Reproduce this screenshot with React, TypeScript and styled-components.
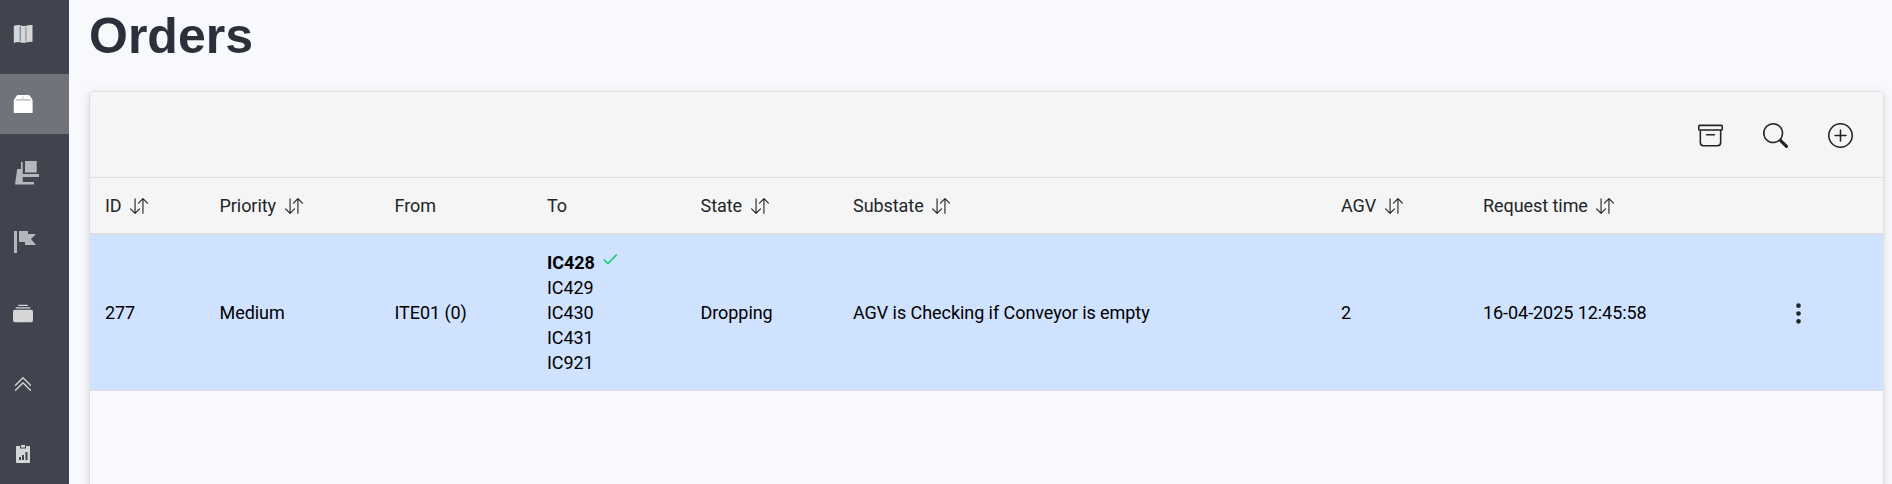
import React from "react";
import styled, { createGlobalStyle } from "styled-components";
import {
  BsArchive,
  BsArrowDownUp,
  BsChevronDoubleUp,
  BsCollectionFill,
  BsPlusCircle,
  BsSearch,
  BsThreeDotsVertical,
} from "react-icons/bs";

const GlobalStyle = createGlobalStyle`
  * { box-sizing: border-box; }
  body {
    margin: 0;
    background: #f8f9fd;
    color: #212529;
    font-family: Roboto, "Liberation Sans", sans-serif;
    font-size: 18px;
    line-height: 25px;
    letter-spacing: -0.06px;
    overflow: hidden;
  }
`;

const Page = styled.div`
  display: flex;
  height: 484px;
  overflow: hidden;
`;

const Sidebar = styled.nav`
  flex: none;
  width: 69px;
  padding-top: 4px;
  display: flex;
  flex-direction: column;
  gap: 10px;
  background: #40444f;
`;

const NavItem = styled.a<{ $active?: boolean }>`
  flex: none;
  display: flex;
  align-items: center;
  width: 74px;
  height: 60px;
  padding-left: 13px;
  color: ${(p) => (p.$active ? "#fff" : "#d5d6d8")};
  background: ${(p) => (p.$active ? "rgba(255, 255, 255, 0.25)" : "transparent")};
  svg { display: block; }
`;

const Main = styled.main`
  flex: 1;
  min-width: 0;
  padding: 6px 8px 0 20px;
  display: flex;
  flex-direction: column;
`;

const Title = styled.h1`
  margin: 0 0 25px;
  font: bold 50px/60px "Liberation Sans", Arial, sans-serif;
  letter-spacing: 0;
  color: #2c303b;
`;

const Card = styled.section`
  flex: none;
  width: 1795px;
  height: 480px;
  border: 1px solid #dedfe0;
  border-radius: 4px;
  box-shadow: 0 2px 8px rgba(0, 0, 0, 0.13);
  overflow: hidden;
`;

const Toolbar = styled.div`
  display: flex;
  justify-content: flex-end;
  align-items: center;
  gap: 40px;
  height: 86px;
  padding: 2px 30px 0 0;
  background: #f5f5f5;
  border-bottom: 1px solid #dedede;
`;

const ToolButton = styled.button`
  display: block;
  width: 25px;
  height: 25px;
  padding: 0;
  border: 0;
  background: none;
  color: #212529;
  svg { display: block; width: 25px; height: 25px; }
`;

const Row = styled.div`
  display: grid;
  grid-template-columns: 114.5px 175px 152.5px 153.5px 152.5px 488px 142px 303px 1fr;
  align-items: center;
  padding-left: 15px;
`;

const HeaderRow = styled(Row)`
  height: 57px;
  background: #f5f5f5;
  border-bottom: 2px solid #dedede;
`;

const OrderRow = styled(Row)`
  height: 156px;
  background: #cfe2ff;
  border-bottom: 1px solid #dadde2;
  color: #000;
`;

const HeaderCell = styled.div`
  display: flex;
  align-items: center;
  gap: 8.5px;
  white-space: nowrap;
  svg { width: 18px; height: 18px; }
`;

const Cell = styled.div`
  white-space: nowrap;
`;

const Stop = styled.div<{ $done?: boolean }>`
  display: flex;
  height: 25px;
  gap: 8px;
  font-weight: ${(p) => (p.$done ? 700 : 400)};
  svg { margin-top: 3px; }
`;

const MenuButton = styled(ToolButton)`
  margin-top: 1px;
`;

const MapIcon = () => (
  <svg width="20" height="20" viewBox="0 0 20 20">
    <path
      fill="currentColor"
      d="M.8 2Q4 .4 7 1.3Q10 2.6 13 1.7Q16 .6 19.5 1V18Q16 17.5 13 18.5Q10 19.3 7 18.3Q4 17.6.8 19z"
    />
    <path fill="#52749c" d="M6.7 2.2h1v15h-1z" />
    <path fill="#8b8276" d="M12.4 3h1v14.5h-1z" />
  </svg>
);

const BoxIcon = () => (
  <svg width="20" height="20" viewBox="0 0 20 20">
    <path fill="currentColor" d="M5 1h10.5q1 0 1.4.7L19.6 6V19H.8V6L3.6 1.7Q4 1 5 1z" />
    <path fill="#c5c8cd" d="M2.3 5h7.2V2.2h1V5h7.3l-.3 1.8H2.5z" />
  </svg>
);

const ForkliftIcon = () => (
  <svg width="26" height="26" viewBox="0 0 26 26" fill="#b6b7bc">
    <path d="M12 0h11.7v11.5H12zM8 1h1.7v12H26v3H9.7v5H21v2.5H2L4.2 8H8z" />
  </svg>
);

const FlagIcon = () => (
  <svg width="24" height="28" viewBox="0 0 24 28" fill="#b6b7bc">
    <path d="M1 1h3v22H1zM6 1h9v3h8l-5 5 5 6H12v-3H6z" />
  </svg>
);

const ReportIcon = () => (
  <svg width="20" height="20" viewBox="0 0 20 20">
    <path
      fill="currentColor"
      d="M3.5 2H7v2.5h6V2h3.5q.5 0 .5.5V18q0 1-1 1H4q-1 0-1-1V2.5Q3 2 3.5 2zM8 1h4v2.500H8z"
    />
    <path fill="#40444f" d="M6 13h2v3H6zM9 11h2v5H9zM12.5 8h2v8h-2z" />
  </svg>
);

const CheckIcon = () => (
  <svg width="15" height="14" viewBox="0 0 15 14" fill="none" stroke="#0ec95a" strokeWidth="1.5">
    <path d="M.7 6.5L5 10.5L13.7 1.5" />
  </svg>
);

const columns: { label: string; sortable?: boolean }[] = [
  { label: "ID", sortable: true },
  { label: "Priority", sortable: true },
  { label: "From" },
  { label: "To" },
  { label: "State", sortable: true },
  { label: "Substate", sortable: true },
  { label: "AGV", sortable: true },
  { label: "Request time", sortable: true },
];

const stops = ["IC428", "IC429", "IC430", "IC431", "IC921"];

export default function App() {
  return (
    <>
      <GlobalStyle />
      <Page>
        <Sidebar>
          <NavItem><MapIcon /></NavItem>
          <NavItem $active><BoxIcon /></NavItem>
          <NavItem><ForkliftIcon /></NavItem>
          <NavItem><FlagIcon /></NavItem>
          <NavItem><BsCollectionFill size={20} /></NavItem>
          <NavItem><BsChevronDoubleUp size={20} /></NavItem>
          <NavItem><ReportIcon /></NavItem>
        </Sidebar>
        <Main>
          <Title>Orders</Title>
          <Card>
            <Toolbar>
              <ToolButton aria-label="Archive"><BsArchive /></ToolButton>
              <ToolButton aria-label="Search"><BsSearch /></ToolButton>
              <ToolButton aria-label="Add order"><BsPlusCircle /></ToolButton>
            </Toolbar>
            <HeaderRow>
              {columns.map((c) => (
                <HeaderCell key={c.label}>
                  {c.label}
                  {c.sortable && <BsArrowDownUp />}
                </HeaderCell>
              ))}
            </HeaderRow>
            <OrderRow>
              <Cell>277</Cell>
              <Cell>Medium</Cell>
              <Cell>ITE01 (0)</Cell>
              <Cell>
                {stops.map((s, i) => (
                  <Stop key={s} $done={i === 0}>
                    {s}
                    {i === 0 && <CheckIcon />}
                  </Stop>
                ))}
              </Cell>
              <Cell>Dropping</Cell>
              <Cell>AGV is Checking if Conveyor is empty</Cell>
              <Cell>2</Cell>
              <Cell>16-04-2025 12:45:58</Cell>
              <MenuButton aria-label="Order menu"><BsThreeDotsVertical /></MenuButton>
            </OrderRow>
          </Card>
        </Main>
      </Page>
    </>
  );
}
